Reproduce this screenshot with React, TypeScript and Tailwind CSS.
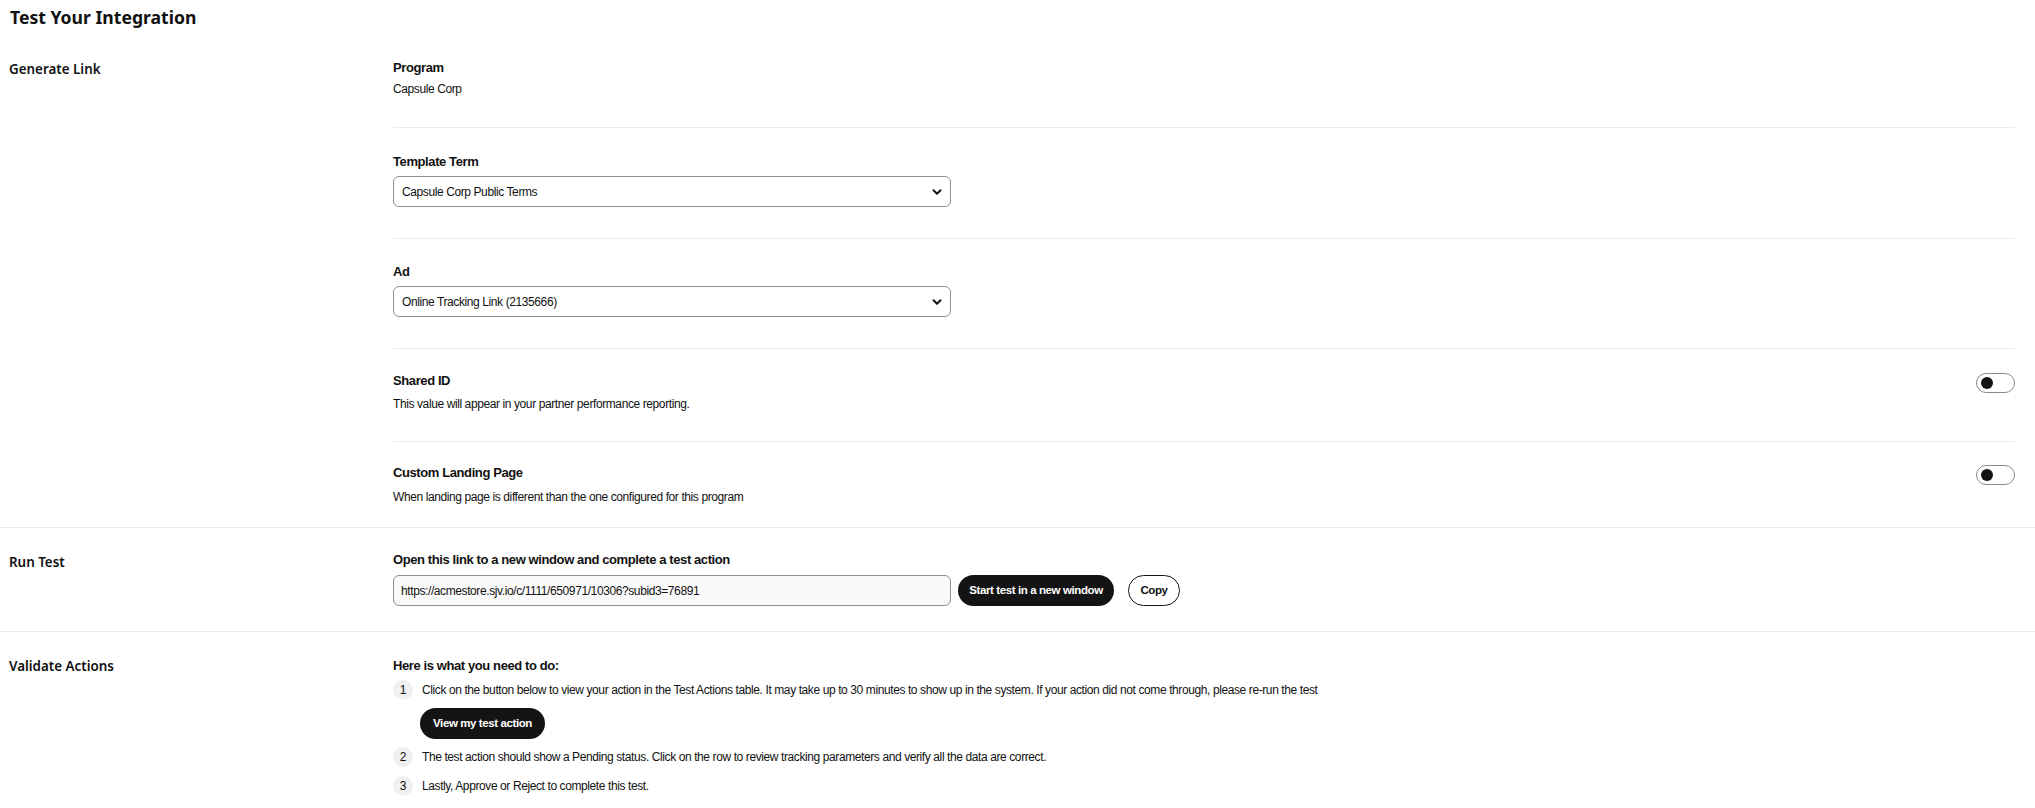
import { ChevronDown } from "lucide-react";

// condensed look: Liberation Sans with tight tracking
const body = "font-['Liberation_Sans',sans-serif] tracking-[-0.4px]";
const label = "text-[13px] font-bold leading-[20px]";
const text = "text-[12px] leading-[18px]";

function Toggle() {
  return (
    <div className="mt-[2px] flex h-[20px] w-[39px] shrink-0 items-center rounded-full border border-[#8a8a8a] bg-white px-[4px]">
      <div className="h-[12px] w-[12px] rounded-full bg-[#141414]" />
    </div>
  );
}

function Select({ value }: { value: string }) {
  return (
    <div className={`mt-[4px] flex h-[31px] w-[558px] items-center justify-between rounded-[6px] border border-[#8f8f8f] bg-white pl-[8px] pr-[6px] ${text}`}>
      <span>{value}</span>
      <ChevronDown size={14} strokeWidth={3.4} className="text-[#141414]" />
    </div>
  );
}

function Step({ n, children }: { n: number; children: React.ReactNode }) {
  return (
    <div className="flex h-[20px] items-center gap-[9px]">
      <div className="flex h-[20px] w-[20px] shrink-0 items-center justify-center rounded-full bg-[#f0f0f0] text-[12px] tracking-normal">{n}</div>
      <span className={text}>{children}</span>
    </div>
  );
}

function Row({ children, last, pt, pb }: { children: React.ReactNode; last?: boolean; pt: string; pb: string }) {
  return <div className={`${pt} ${pb} ${last ? "" : "border-b border-[#ebebeb]"}`}>{children}</div>;
}

function SectionLabel({ children, pt }: { children: React.ReactNode; pt: string }) {
  return (
    <div className={`pl-[9px] ${pt} font-['Noto_Sans',sans-serif] text-[13.4px] font-semibold leading-[20px]`}>{children}</div>
  );
}

export default function App() {
  return (
    <div className="min-h-screen w-full bg-white text-[#111111]">
      <h1 className="h-[40px] pl-[10px] pt-[5px] font-['Noto_Sans',sans-serif] text-[17.6px] font-bold leading-[24px]">
        Test Your Integration
      </h1>

      {/* Generate Link */}
      <section className="grid grid-cols-[393px_1fr] border-b border-[#ebebeb]">
        <SectionLabel pt="pt-[19px]">Generate Link</SectionLabel>
        <div className={`pr-[20px] ${body}`}>
          <Row pt="pt-[18px]" pb="pb-[29px]">
            <div className={label}>Program</div>
            <div className={`mt-[2px] ${text}`}>Capsule Corp</div>
          </Row>
          <Row pt="pt-[24px]" pb="pb-[31px]">
            <div className={label}>Template Term</div>
            <Select value="Capsule Corp Public Terms" />
          </Row>
          <Row pt="pt-[23px]" pb="pb-[31px]">
            <div className={label}>Ad</div>
            <Select value="Online Tracking Link (2135666)" />
          </Row>
          <Row pt="pt-[22px]" pb="pb-[28px]">
            <div className="flex items-start justify-between">
              <div>
                <div className={label}>Shared ID</div>
                <div className={`mt-[4px] ${text}`}>This value will appear in your partner performance reporting.</div>
              </div>
              <Toggle />
            </div>
          </Row>
          <Row pt="pt-[21px]" pb="pb-[21px]" last>
            <div className="flex items-start justify-between">
              <div>
                <div className={label}>Custom Landing Page</div>
                <div className={`mt-[5px] ${text}`}>When landing page is different than the one configured for this program</div>
              </div>
              <Toggle />
            </div>
          </Row>
        </div>
      </section>

      {/* Run Test */}
      <section className="grid grid-cols-[393px_1fr] border-b border-[#ebebeb]">
        <SectionLabel pt="pt-[24px]">Run Test</SectionLabel>
        <div className={`pb-[25px] pr-[20px] pt-[22px] ${body}`}>
          <div className={label}>Open this link to a new window and complete a test action</div>
          <div className="mt-[5px] flex items-center">
            <div className={`flex h-[31px] w-[558px] items-center rounded-[6px] border border-[#8f8f8f] bg-[#fafafa] pl-[7px] ${text}`}>
              https://acmestore.sjv.io/c/1111/650971/10306?subid3=76891
            </div>
            <button className="ml-[7px] h-[31px] w-[156px] whitespace-nowrap rounded-full bg-[#141414] text-[11.5px] font-bold text-white">
              Start test in a new window
            </button>
            <button className="ml-[14px] h-[31px] w-[52px] rounded-full border border-[#141414] bg-white text-[11.5px] font-bold">
              Copy
            </button>
          </div>
        </div>
      </section>

      {/* Validate Actions */}
      <section className="grid grid-cols-[393px_1fr]">
        <SectionLabel pt="pt-[24px]">Validate Actions</SectionLabel>
        <div className={`pb-[20px] pr-[20px] pt-[24px] ${body}`}>
          <div className={label}>Here is what you need to do:</div>
          <div className="mt-[4px] flex flex-col">
            <Step n={1}>
              Click on the button below to view your action in the Test Actions table. It may take up to 30 minutes to show up in the system. If your action did not come through, please re-run the test
            </Step>
            <button className="ml-[27px] mt-[8px] h-[31px] w-[125px] whitespace-nowrap rounded-full bg-[#141414] text-[11.5px] font-bold text-white">
              View my test action
            </button>
            <div className="mt-[8px]">
              <Step n={2}>The test action should show a Pending status. Click on the row to review tracking parameters and verify all the data are correct.</Step>
            </div>
            <div className="mt-[9px]">
              <Step n={3}>Lastly, Approve or Reject to complete this test.</Step>
            </div>
          </div>
        </div>
      </section>
    </div>
  );
}
